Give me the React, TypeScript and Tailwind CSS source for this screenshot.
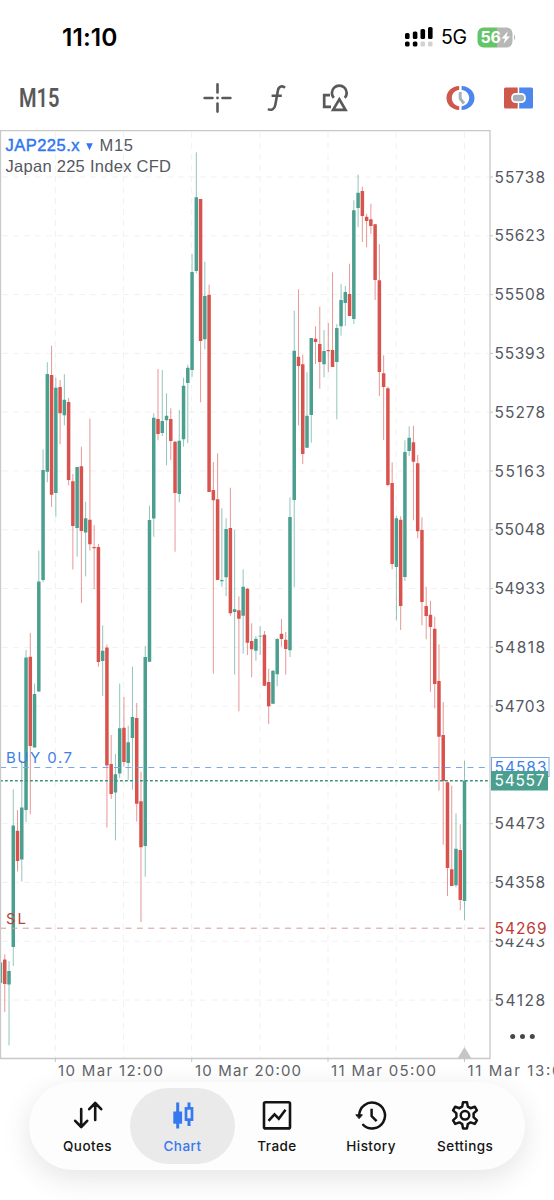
import React from "react";

type Candle = [kind: "u" | "d", high: number, top: number, bottom: number, low: number];

const UP = "#4a9f8f";
const DOWN = "#d9534e";

const candles: Candle[] = [
  ["u", 962, 962.5, 983, 983], ["d", 954.3, 959.6, 984, 1012], ["u", 961, 971, 984.6, 1045.4],
  ["u", 789.3, 825.4, 947, 966], ["d", 810, 830.7, 861, 871.4], ["u", 760.7, 807.5, 859.6, 881.4],
  ["u", 650, 657.5, 810, 822], ["d", 633, 656.8, 746, 814.3], ["u", 683.6, 694, 747.5, 747.5],
  ["u", 550.7, 581.4, 691.4, 692], ["u", 449.3, 470, 580, 582], ["u", 362.3, 374, 471.7, 482.3],
  ["d", 345.7, 375, 494.7, 507], ["u", 377.7, 387.7, 493, 516.7], ["d", 380, 387, 413.3, 444.3],
  ["u", 374.3, 399.7, 415.3, 425.3], ["d", 398, 402, 480, 485.3], ["d", 474, 481.3, 526, 569.6],
  ["u", 467, 467, 528, 556.8], ["d", 446.7, 466.3, 531, 603], ["u", 501.7, 518.3, 532.5, 576.4],
  ["d", 418.7, 519.7, 544.3, 550.7], ["d", 525, 547, 548.2, 589], ["d", 544, 547, 662, 666.8],
  ["u", 625.4, 650.7, 661, 696], ["d", 644.6, 647.5, 765.4, 827.5], ["d", 735, 764, 794, 799],
  ["u", 754, 774.3, 792.5, 840.4], ["u", 683.6, 728.2, 773.6, 778], ["d", 697, 727.7, 762, 766.7],
  ["u", 725.7, 742.3, 763, 779.7], ["u", 666.7, 717, 738, 789.7], ["d", 703, 718, 803.7, 821.7],
  ["d", 771.7, 801.3, 847.3, 922], ["u", 646, 657, 846, 876.7], ["u", 505.7, 520, 661.7, 662],
  ["u", 413.3, 417.7, 518.5, 536.7], ["d", 369, 419, 434, 440.3], ["u", 370, 421, 433, 436],
  ["u", 393.3, 415.7, 420.3, 465.3], ["d", 408.3, 419, 441, 460], ["d", 441, 441.7, 493, 551.7],
  ["u", 410, 440.7, 494, 502.3], ["u", 377.7, 385.7, 439.3, 446.7], ["u", 364.7, 367.7, 383, 443],
  ["u", 254, 272, 370, 376.7], ["u", 152.3, 197.3, 271, 273.3], ["d", 199, 199, 341, 402.3],
  ["u", 261.7, 296, 339.3, 349.3], ["d", 284.7, 294.7, 492, 492], ["d", 462, 490, 500.3, 673.7],
  ["d", 453.3, 499.3, 580, 580], ["u", 508.3, 580, 581.3, 586.7], ["u", 518.3, 529, 577.3, 596.3],
  ["d", 487.7, 528, 613.3, 615.7], ["u", 530, 609.3, 612, 674.7], ["d", 596.3, 610.3, 618.7, 711.3],
  ["u", 569.3, 586.7, 615.7, 653.7], ["d", 588, 588.7, 642.7, 655], ["d", 623.3, 641, 649.3, 677.3],
  ["u", 636, 638.7, 650.7, 660.7], ["u", 626, 635.7, 636.5, 655], ["d", 631, 634.7, 685.7, 686],
  ["d", 668.7, 682, 706.3, 724], ["u", 670, 670.7, 703.7, 704], ["u", 638, 639, 674.3, 686.3],
  ["d", 619, 633.7, 639, 646.7], ["d", 632, 639.7, 649, 674.7], ["u", 497.3, 517, 650.3, 657],
  ["u", 310.7, 350.7, 500, 587.3], ["d", 289.3, 356.7, 366, 425.3], ["d", 354.7, 364.3, 454, 464],
  ["u", 372.3, 415.7, 447.7, 448], ["u", 338, 338, 415, 442.7], ["d", 326.3, 338.7, 342, 364],
  ["d", 306.7, 344, 362, 388.7], ["u", 330, 351, 364.3, 377.3], ["d", 323, 350, 351.2, 372.3],
  ["d", 272.3, 350, 367, 367], ["u", 324, 328, 362, 419.3], ["u", 284, 300, 326.3, 335.7],
  ["u", 286, 292, 303, 326], ["d", 263.7, 294, 316, 316], ["u", 200.3, 210.3, 319, 324],
  ["u", 174.7, 192.7, 208, 227], ["d", 186.7, 191, 216, 242], ["d", 213.7, 216.7, 221, 247.3],
  ["d", 203.7, 219.3, 226, 234], ["d", 224, 224.3, 280, 300], ["d", 244, 280.3, 372, 396],
  ["d", 355.3, 373.3, 387, 440], ["d", 386.5, 388.3, 485, 486.3], ["d", 462.3, 483, 564, 569.3],
  ["u", 515.7, 518.3, 567, 620.3], ["d", 516.3, 519.7, 606, 630], ["u", 440.3, 452, 577, 581],
  ["u", 426.3, 437.7, 451, 456], ["d", 425.7, 442.3, 461.7, 520.3], ["d", 455, 463.3, 531.3, 538.3],
  ["d", 517.3, 530, 602, 625.3], ["d", 586.7, 606, 616, 639.3], ["d", 600.7, 614.7, 627, 691.7],
  ["d", 616.7, 628.7, 684, 708.3], ["d", 644.3, 681, 736.7, 790.7], ["d", 702, 735, 781, 844.7],
  ["d", 782, 782.3, 868, 896], ["d", 785.7, 869.3, 886, 886], ["u", 813.3, 848.7, 885.3, 887.3],
  ["d", 824.3, 850, 900, 910.3], ["u", 760.7, 780.7, 901, 920.3],
];

const prices = [55738, 55623, 55508, 55393, 55278, 55163, 55048, 54933, 54818, 54703, 54588, 54473, 54358, 54243, 54128];
const gridX = [55.3, 123.4, 191.7, 260, 328, 396.2, 464.5];
const times: [number, number, string][] = [
  [58, 105, "10 Mar 12:00"],
  [195, 106, "10 Mar 20:00"],
  [331, 105, "11 Mar 05:00"],
  [467.5, 105, "11 Mar 13:00"],
];
const rowY = (i: number) => 177 + i * 58.79;

function Chart() {
  return (
    <svg className="block w-full" height="956" viewBox="0 130 554 956" fontFamily="Inter, sans-serif" fontSize="15.5">
      <g stroke="#f1f1f1" strokeWidth="1" strokeDasharray="6 5">
        {prices.map((p, i) => i !== 10 && <line key={p} x1="2" x2="489" y1={rowY(i)} y2={rowY(i)} />)}
        {gridX.map((x) => <line key={x} x1={x} x2={x} y1="132" y2="1058" />)}
      </g>
      {candles.map(([k, high, top, bottom, low], i) => {
        const x = 0.5 + i * 4.257;
        const c = k === "u" ? UP : DOWN;
        return (
          <g key={i} fill={c}>
            <rect x={x - 0.5} y={high} width="1" height={low - high} opacity="0.6" />
            <rect x={x - 1.75} y={top} width="3.5" height={bottom - top} rx="0.3" />
          </g>
        );
      })}
      <line x1="0" x2="489" y1="767.5" y2="767.5" stroke="#7ba7ea" strokeDasharray="6 5.4" />
      <line x1="0" x2="489" y1="780.7" y2="780.7" stroke="#3f9080" strokeWidth="1.4" strokeDasharray="2.8 2.2" />
      <line x1="0" x2="489" y1="928.2" y2="928.2" stroke="#d69a96" strokeDasharray="6 5.4" />
      <text x="6" y="763" fill="#3f7fe8" fontSize="15" textLength="66">BUY 0.7</text>
      <text x="6" y="923.5" fill="#b5443d" fontSize="15" textLength="20">SL</text>

      <g fontFamily="'Liberation Sans', Arial, sans-serif" fontSize="16.5" fill="#55585f">
        <text x="5.5" y="151.3" fill="#2f76f0" stroke="#2f76f0" strokeWidth="0.45" textLength="74">JAP225.x</text>
        <path d="M86.2 143.2H92.8L89.5 150.2Z" fill="#2f76f0" />
        <text x="99.5" y="151.3" textLength="33.5">M15</text>
        <text x="5.5" y="172.3" textLength="165.5">Japan 225 Index CFD</text>
      </g>

      <path d="M464.5 1047 L471.5 1058.5 H457.5 Z" fill="#c6c6c6" />
      <path d="M0.5 1058.5 V130.5 H490 V1058.5 Z" fill="none" stroke="#c8c8c8" strokeWidth="1.3" />
      {prices.map((p, i) => i !== 10 && (
        <g key={p}>
          <line x1="490" x2="493" y1={rowY(i)} y2={rowY(i)} stroke="#c4c4c4" />
          <text x="494.5" y={rowY(i) + 5.7} fill="#55585f" textLength="50.5">{p}</text>
        </g>
      ))}
      <rect x="493" y="919" width="60" height="19.5" fill="#fff" />
      <text x="494.5" y="933.7" fill="#bd3b35" textLength="52">54269</text>
      <rect x="491.5" y="757.5" width="57.5" height="19" fill="#fff" stroke="#7ba7ea" />
      <text x="494.5" y="772.7" fill="#3f7fe8" textLength="52">54583</text>
      <rect x="491" y="771" width="57" height="19.5" fill={UP} />
      <text x="494.5" y="786.3" fill="#fff" textLength="50">54557</text>
      {[512.7, 522.5, 532.3].map((x) => <circle key={x} cx={x} cy="1036.5" r="2.5" fill="#45474c" />)}
      {[55.3, 191.7, 328, 464.5].map((x) => <line key={x} x1={x} x2={x} y1="1058" y2="1062" stroke="#c4c4c4" />)}
      {times.map(([x, w, t]) => <text key={t} x={x} y="1076" fill="#606369" fontSize="15" textLength={w}>{t}</text>)}
    </svg>
  );
}

function StatusBar() {
  return (
    <header className="flex h-[74px] items-center justify-between pl-[62px] pr-[37px]">
      <span className="text-[24.5px] font-semibold tracking-[0.1px] text-black">11:10</span>
      <div className="flex items-center">
        <svg width="29" height="22" viewBox="0 0 29 22">
          <g fill="#000">
            <rect x="1" y="7" width="4.6" height="6" rx="1.6" />
            <rect x="8.8" y="5.5" width="4.6" height="7.5" rx="1.6" />
            <rect x="16.5" y="3" width="4.6" height="10" rx="1.6" />
            <rect x="24" y="1" width="4.6" height="12" rx="1.6" />
            <rect x="1" y="15.5" width="4.6" height="5" rx="1.6" />
            <rect x="8.8" y="15.5" width="4.6" height="5" rx="1.6" />
          </g>
          <g fill="#d2d2d2">
            <rect x="16.5" y="15.5" width="4.6" height="5" rx="1.6" />
            <rect x="24" y="15.5" width="4.6" height="5" rx="1.6" />
          </g>
        </svg>
        <span className="ml-[8px] w-[27px] pt-[2px] text-[19.5px] tracking-[-0.3px] text-black">5G</span>
        <svg className="ml-[9px]" width="40" height="21" viewBox="0 0 40 21" fontFamily="Inter, sans-serif">
          <path d="M6.5 0.5 H20 V20.5 H6.5 A6 6 0 0 1 0.5 14.5 V6.5 A6 6 0 0 1 6.5 0.5Z" fill="#65c466" />
          <path d="M20 0.5 H29.5 A6 6 0 0 1 35.5 6.5 V14.5 A6 6 0 0 1 29.5 20.5 H20Z" fill="#b7b7b7" />
          <path d="M37 7.5 Q39.3 10.5 37 13.5Z" fill="#b7b7b7" />
          <text x="3.5" y="16.2" fontSize="16" fontWeight="700" fill="#fff" textLength="20.5">56</text>
          <path d="M30.8 4.2 L24.5 11.4 H28 L26.6 16.8 L33.2 9.4 H29.5Z" fill="#fff" />
        </svg>
      </div>
    </header>
  );
}

function Toolbar() {
  return (
    <div className="flex h-14 items-center pl-[19px] pr-[20px] pb-2 text-[#58595b]">
      <svg width="42" height="30" viewBox="0 0 42 30">
        <text x="0" y="23.7" fontFamily="Roboto, sans-serif" fontSize="25" fontWeight="600" fill="currentColor" textLength="40.5" lengthAdjust="spacingAndGlyphs">M15</text>
      </svg>
      <svg className="ml-[142px]" width="29" height="30" viewBox="0 0 29 30" fill="none" stroke="currentColor" strokeWidth="2.6" strokeLinecap="round">
        <path d="M1.6 15H9.5M19.5 15H27.4M14.5 1.4V9.5M14.5 20.5V28.6" />
        <circle cx="14.5" cy="15" r="1.4" fill="currentColor" stroke="none" />
      </svg>
      <svg className="ml-[35px]" width="19" height="28" viewBox="0 0 19 28" fill="none" stroke="currentColor" strokeWidth="2.6">
        <path d="M18 3.7C15.6 1.4 11.7 1.9 10.9 6.4L8.3 21C7.5 25.4 4.2 26.7 0.9 25.1M4.6 11.8H14.8" />
      </svg>
      <svg className="ml-[36px]" width="29" height="30" viewBox="0 0 29 30" fill="none" stroke="currentColor" strokeWidth="2.7">
        <path d="M11.8 14.9A7.4 7.4 0 1 1 22.8 14.9" />
        <path d="M17.3 16.3L23.5 26.8H11.1Z" />
        <path d="M8 12.1H2.2V23.8H9" />
      </svg>
      <svg className="ml-auto" width="29" height="26" viewBox="0 0 29 26" fill="none">
        <path d="M13.2 1C6 1.4 0.5 6.2 0.5 13S6 24.6 13.2 25V21.3C8.8 20.5 5.8 17.2 5.8 13S8.8 5.5 13.2 4.7Z" fill="#cd584b" />
        <path d="M15.6 1C22.8 1.4 28.5 6.2 28.5 13S22.8 24.6 15.6 25V21.3C20 20.5 23.2 17.2 23.2 13S20 5.5 15.6 4.7Z" fill="#4b87ec" />
        <path d="M14.2 7V13.6L18 18.5" stroke="#a5b1bb" strokeWidth="3" />
      </svg>
      <svg className="ml-[28px]" width="31" height="22" viewBox="0 0 31 22">
        <path d="M2.5 0.5H14.7V21.5H2.5Q1 21.5 1 20V2Q1 0.5 2.5 0.5Z" fill="#cd584b" />
        <path d="M16.2 0.5H28.5Q30 0.5 30 2V20Q30 21.5 28.5 21.5H16.2Z" fill="#4b87ec" />
        <rect x="9" y="6.8" width="13" height="8.4" rx="3.6" fill="#a5b1bb" stroke="#fff" strokeWidth="1.7" />
      </svg>
    </div>
  );
}

const icons: Record<string, React.ReactNode> = {
  Quotes: <path d="M9.2 9V26M3.2 20.8L9.2 27L15.2 20.8M23.2 20V4M17.2 9.2L23.2 3L29.2 9.2" strokeWidth="2.6" />,
  Chart: (
    <g strokeLinecap="butt" strokeLinejoin="miter">
      <path d="M10.7 2.5V28.5" strokeWidth="3" />
      <rect x="6.3" y="11.5" width="8.8" height="12.2" fill="currentColor" stroke="none" />
      <path d="M22 2.5V8M22 20V26" strokeWidth="3" />
      <rect x="19" y="8.4" width="6" height="11.2" strokeWidth="2.7" />
    </g>
  ),
  Trade: (
    <g strokeWidth="2.6">
      <rect x="3" y="2.2" width="26" height="26.2" rx="1.5" />
      <path d="M7.5 20.8L13.5 14.4L17.8 18.7L24.5 9.8" strokeLinecap="butt" strokeLinejoin="miter" />
    </g>
  ),
  History: (
    <g strokeWidth="2.5">
      <path d="M4.2 15.3A12.9 12.9 0 1 1 8.2 24.8" />
      <path d="M1.2 14.8H7.4L4.3 18.4Z" fill="currentColor" strokeWidth="1" />
      <path d="M16.6 8.8V16L21.6 21.2" strokeLinecap="butt" strokeLinejoin="miter" />
    </g>
  ),
  Settings: (
    <g strokeWidth="2.5">
      <path d="M13.2 6.6L14 2.2H18L18.8 6.6L21.6 8.2L25.8 6.7L27.9 10.3L24.6 13.4V17.2L27.9 20.3L25.8 23.9L21.6 22.4L18.8 24L18 28.4H14L13.2 24L10.4 22.4L6.2 23.9L4.1 20.3L7.4 17.2V13.4L4.1 10.3L6.2 6.7L10.4 8.2Z" />
      <circle cx="16" cy="15.3" r="4.3" />
    </g>
  ),
};

function TabBar() {
  return (
    <nav className="mx-[29px] -mt-[4px] flex h-[88px] rounded-[44px] bg-[#fdfdfd] px-[6px] py-[6px] shadow-[0_8px_30px_rgba(0,0,0,0.11)]">
      {Object.keys(icons).map((name) => (
        <div
          key={name}
          className={
            name === "Chart"
              ? "flex w-[105px] shrink-0 flex-col items-center rounded-[38px] bg-[#eaeaea] pt-[12px] text-[#3579f0]"
              : name === "Quotes"
                ? "-mr-[10px] flex w-[105px] shrink-0 flex-col items-center pt-[12px] text-[#141414]"
                : "flex w-[94.1px] shrink-0 flex-col items-center pt-[12px] text-[#141414] nth-3:-ml-[5px]"
          }
        >
          <svg width="32" height="32" viewBox="0 0 32 32" fill="none" stroke="currentColor" strokeLinecap="round" strokeLinejoin="round">
            {icons[name]}
          </svg>
          <span className="mt-[4px] text-[13.5px] leading-5 font-medium tracking-[0.45px]">{name}</span>
        </div>
      ))}
    </nav>
  );
}

export default function App() {
  return (
    <main className="h-[1200px] w-[554px] overflow-hidden bg-white font-['Inter',sans-serif]">
      <StatusBar />
      <Toolbar />
      <Chart />
      <TabBar />
    </main>
  );
}
